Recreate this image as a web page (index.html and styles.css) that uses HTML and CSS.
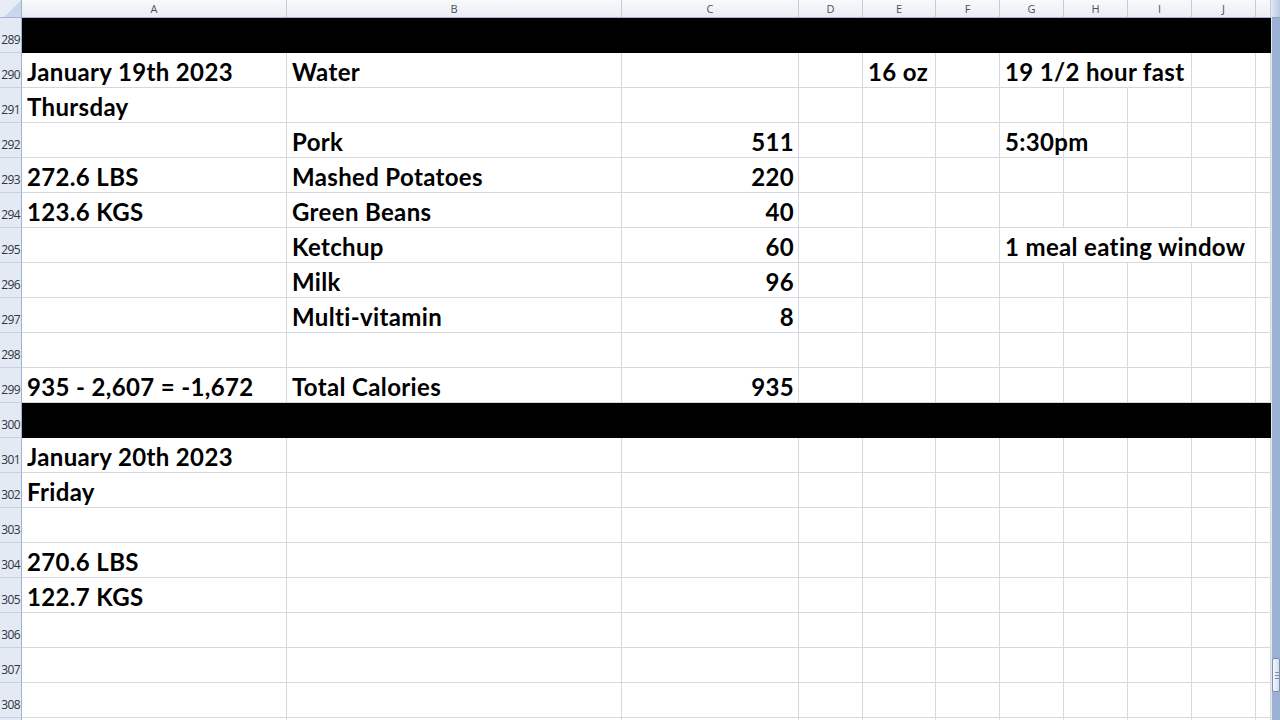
FILE: index.html
```html
<!DOCTYPE html>
<html lang="en">
<head>
    <meta charset="UTF-8">
    <title>Calories log - Book1</title>
    <link rel="stylesheet" href="styles.css">
</head>
<body>
    <div class="window">
        <div class="sheet">
            <div class="colhdr">
                <div class="corner"></div>
                <div>A</div><div>B</div><div>C</div><div>D</div><div>E</div><div>F</div>
                <div>G</div><div>H</div><div>I</div><div>J</div><div></div>
            </div>

            <div class="row bar">
                <div class="rh">289</div>
                <div></div><div></div><div></div><div></div><div></div><div></div>
                <div></div><div></div><div></div><div></div><div></div>
            </div>
            <div class="row">
                <div class="rh">290</div>
                <div>January 19th 2023</div><div>Water</div><div></div><div></div><div>16 oz</div><div></div>
                <div class="span3">19 1/2 hour fast</div><div></div><div></div>
            </div>
            <div class="row">
                <div class="rh">291</div>
                <div>Thursday</div><div></div><div></div><div></div><div></div><div></div>
                <div></div><div></div><div></div><div></div><div></div>
            </div>
            <div class="row">
                <div class="rh">292</div>
                <div></div><div>Pork</div><div class="num">511</div><div></div><div></div><div></div>
                <div>5:30pm</div><div></div><div></div><div></div><div></div>
            </div>
            <div class="row">
                <div class="rh">293</div>
                <div>272.6 LBS</div><div>Mashed Potatoes</div><div class="num">220</div><div></div><div></div><div></div>
                <div></div><div></div><div></div><div></div><div></div>
            </div>
            <div class="row">
                <div class="rh">294</div>
                <div>123.6 KGS</div><div>Green Beans</div><div class="num">40</div><div></div><div></div><div></div>
                <div></div><div></div><div></div><div></div><div></div>
            </div>
            <div class="row">
                <div class="rh">295</div>
                <div></div><div>Ketchup</div><div class="num">60</div><div></div><div></div><div></div>
                <div class="span4">1 meal eating window</div><div></div>
            </div>
            <div class="row">
                <div class="rh">296</div>
                <div></div><div>Milk</div><div class="num">96</div><div></div><div></div><div></div>
                <div></div><div></div><div></div><div></div><div></div>
            </div>
            <div class="row">
                <div class="rh">297</div>
                <div></div><div>Multi-vitamin</div><div class="num">8</div><div></div><div></div><div></div>
                <div></div><div></div><div></div><div></div><div></div>
            </div>
            <div class="row">
                <div class="rh">298</div>
                <div></div><div></div><div></div><div></div><div></div><div></div>
                <div></div><div></div><div></div><div></div><div></div>
            </div>
            <div class="row">
                <div class="rh">299</div>
                <div>935 - 2,607 = -1,672</div><div>Total Calories</div><div class="num">935</div><div></div><div></div><div></div>
                <div></div><div></div><div></div><div></div><div></div>
            </div>
            <div class="row bar">
                <div class="rh">300</div>
                <div></div><div></div><div></div><div></div><div></div><div></div>
                <div></div><div></div><div></div><div></div><div></div>
            </div>
            <div class="row">
                <div class="rh">301</div>
                <div>January 20th 2023</div><div></div><div></div><div></div><div></div><div></div>
                <div></div><div></div><div></div><div></div><div></div>
            </div>
            <div class="row">
                <div class="rh">302</div>
                <div>Friday</div><div></div><div></div><div></div><div></div><div></div>
                <div></div><div></div><div></div><div></div><div></div>
            </div>
            <div class="row">
                <div class="rh">303</div>
                <div></div><div></div><div></div><div></div><div></div><div></div>
                <div></div><div></div><div></div><div></div><div></div>
            </div>
            <div class="row">
                <div class="rh">304</div>
                <div>270.6 LBS</div><div></div><div></div><div></div><div></div><div></div>
                <div></div><div></div><div></div><div></div><div></div>
            </div>
            <div class="row">
                <div class="rh">305</div>
                <div>122.7 KGS</div><div></div><div></div><div></div><div></div><div></div>
                <div></div><div></div><div></div><div></div><div></div>
            </div>
            <div class="row">
                <div class="rh">306</div>
                <div></div><div></div><div></div><div></div><div></div><div></div>
                <div></div><div></div><div></div><div></div><div></div>
            </div>
            <div class="row">
                <div class="rh">307</div>
                <div></div><div></div><div></div><div></div><div></div><div></div>
                <div></div><div></div><div></div><div></div><div></div>
            </div>
            <div class="row">
                <div class="rh">308</div>
                <div></div><div></div><div></div><div></div><div></div><div></div>
                <div></div><div></div><div></div><div></div><div></div>
            </div>
            <div class="row last">
                <div class="rh"></div>
                <div></div><div></div><div></div><div></div><div></div><div></div>
                <div></div><div></div><div></div><div></div><div></div>
            </div>
        </div>

        <div class="vscroll">
            <div class="arrow"></div>
            <div class="track"></div>
            <div class="thumb"><span></span><span></span><span></span></div>
            <div class="track-end"></div>
        </div>
    </div>
</body>
</html>
```

FILE: styles.css
```css
html, body {
    margin: 0;
    height: 100%;
    overflow: hidden;
    background: #ffffff;
}
.window {
    display: flex;
    width: 1280px;
    height: 720px;
    overflow: hidden;
}
.sheet {
    width: 1271px;
    flex: none;
}

/* column letters */
.colhdr,
.row {
    display: grid;
    grid-template-columns: 22px 265px 335px 177px 64px 73px 64px 64px 64px 64px 64px 15px;
}
.colhdr {
    height: 18px;
    box-sizing: border-box;
    border-bottom: 1px solid #a9afd6;
    background: linear-gradient(#f9fafd, #e9ecf4);
    font-family: "Open Sans", sans-serif;
    font-size: 11px;
    color: #4a4f5c;
}
.colhdr > div {
    text-align: center;
    line-height: 17px;
    border-right: 1px solid #c7cbd8;
}
.colhdr .corner {
    background: linear-gradient(135deg, #e6edf7 55%, #c9d7ec 56%);
    border-right: 1px solid #9fb2d0;
}

/* cells */
.row {
    height: 35px;
    font-family: Lato, "Open Sans", sans-serif;
    font-weight: 700;
    font-size: 24px;
    letter-spacing: 0.35px;
    color: #000000;
}
.row > div {
    box-sizing: border-box;
    border-right: 1px solid #d5d8de;
    border-bottom: 1px solid #d5d8de;
    display: flex;
    align-items: flex-end;
    padding: 0 4px 1px 5px;
    white-space: nowrap;
    line-height: 28px;
}
.row > .num {
    justify-content: flex-end;
}
.row > .span3 {
    grid-column: span 3;
}
.row > .span4 {
    grid-column: span 4;
}
.row > .rh {
    background: #e4eaf4;
    border-right: 1px solid #9fb2d0;
    border-bottom: 1px solid #c5d0e2;
    justify-content: flex-end;
    padding: 0 1px 5px 0;
    font-family: "Open Sans", sans-serif;
    font-weight: 400;
    font-size: 12px;
    letter-spacing: -0.6px;
    line-height: 15px;
    color: #2f3540;
}
.bar > div {
    background: #000000;
    border-color: #000000;
}

/* vertical scroll bar */
.vscroll {
    width: 9px;
    height: 720px;
    display: flex;
    flex-direction: column;
    background: #9bb0d3;
    border-left: 1px solid #e2e8f2;
    box-sizing: border-box;
}
.vscroll .arrow {
    height: 17px;
    background: linear-gradient(90deg, #dbe4f2, #b9c9e3);
    border-bottom: 1px solid #8ea3c7;
}
.vscroll .track {
    flex: 1;
}
.vscroll .thumb {
    height: 34px;
    box-sizing: border-box;
    background: linear-gradient(90deg, #f4f6fb, #d4deee);
    border: 1px solid #7e8fae;
    border-radius: 2px;
    display: flex;
    flex-direction: column;
    justify-content: center;
    gap: 2px;
    padding-left: 2px;
}
.vscroll .thumb span {
    display: block;
    height: 1px;
    background: #7e8fae;
}
.vscroll .track-end {
    height: 28px;
}
```
